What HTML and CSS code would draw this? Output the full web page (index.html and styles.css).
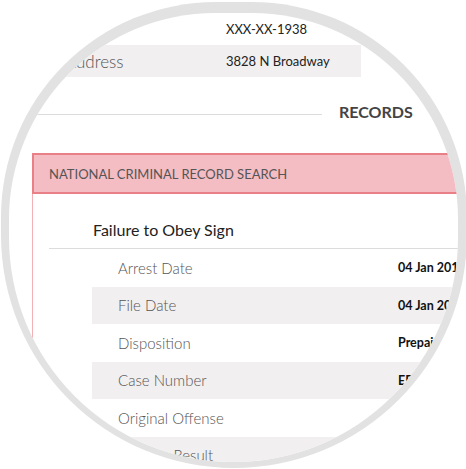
FILE: index.html
```html
<!DOCTYPE html>
<html>
<head>
<meta charset="utf-8">
<link rel="stylesheet" href="styles.css">
</head>
<body>
<div class="lens">
  <div class="view">
    <div class="page">
      <div class="info">
        <div class="info-row"><span class="info-label">SSN</span><span class="info-value">XXX-XX-1938</span></div>
        <div class="info-row alt"><span class="info-label">Address</span><span class="info-value">3828 N Broadway</span></div>
      </div>
      <div class="records-head">
        <div class="records-line"></div>
        <div class="records-title">RECORDS</div>
      </div>
      <div class="panel">
        <div class="panel-head">NATIONAL CRIMINAL RECORD SEARCH</div>
        <div class="panel-body">
          <div class="offense-title"><span>Failure to Obey Sign</span></div>
          <div class="rows">
            <div class="row"><span class="row-label">Arrest Date</span><span class="row-value">04 Jan 2019</span></div>
            <div class="row alt"><span class="row-label">File Date</span><span class="row-value">04 Jan 2019</span></div>
            <div class="row"><span class="row-label">Disposition</span><span class="row-value">Prepaid</span></div>
            <div class="row alt"><span class="row-label">Case Number</span><span class="row-value">EF1240893</span></div>
            <div class="row"><span class="row-label">Original Offense</span><span class="row-value">Failure to Obey Sign</span></div>
            <div class="row alt"><span class="row-label">Offense Result</span><span class="row-value">Guilty</span></div>
          </div>
        </div>
      </div>
    </div>
  </div>
</div>
</body>
</html>
```
FILE: styles.css
```css
html, body {
  margin: 0;
  padding: 0;
  background: #ffffff;
}
body {
  font-family: Lato, "Open Sans", sans-serif;
  color: #222;
}
.lens {
  box-sizing: border-box;
  width: 466px;
  height: 466px;
  margin: 2px 0 0 1px;
  padding: 11px 0 0 8px;
  border-radius: 215px 215px 233px 233px;
  background: #e2e2e2;
}
.view {
  width: 449px;
  height: 449px;
  border-radius: 206px 206px 224.5px 224.5px;
  overflow: hidden;
  background: #fff;
}
.page {
  width: 560px;
}
.info {
  margin-left: 11px;
  width: 341px;
}
.info-row {
  display: flex;
  align-items: center;
  height: 32px;
}
.info-row.alt {
  background: #f1eff0;
}
.info-label {
  width: 161px;
  padding-left: 45px;
  font-size: 17px;
  font-weight: 300;
  color: #555;
}
.info-value {
  font-size: 13px;
  color: #222;
}
.records-head {
  display: flex;
  align-items: center;
  height: 24px;
  margin-top: 22px;
}
.records-line {
  width: 313px;
  border-top: 1px solid #dcdcdc;
  margin-top: 6px;
}
.records-title {
  margin-left: 17px;
  font-size: 16px;
  font-weight: 700;
  color: #444;
}
.panel {
  margin-top: 30px;
  margin-left: 23px;
  width: 500px;
}
.panel-head {
  height: 37px;
  display: flex;
  align-items: center;
  padding-left: 15px;
  background: #f4bcc3;
  border: 2px solid #ea8087;
  font-size: 13px;
  color: #555;
}
.panel-body {
  border-left: 1px solid #f3b1b6;
}
.offense-title {
  margin-left: 16px;
  border-bottom: 1px solid #dcdcdc;
  padding: 26px 0 8px 44px;
  font-size: 16px;
  line-height: 20px;
  color: #222;
}
.rows {
  margin-left: 59px;
}
.row {
  display: flex;
  align-items: center;
  height: 37.5px;
}
.row.alt {
  background: #f1eff0;
}
.row-label {
  width: 280px;
  padding-left: 26px;
  font-size: 15px;
  font-weight: 300;
  color: #555;
}
.row-value {
  font-size: 12.5px;
  font-weight: 700;
  color: #111;
}
```
